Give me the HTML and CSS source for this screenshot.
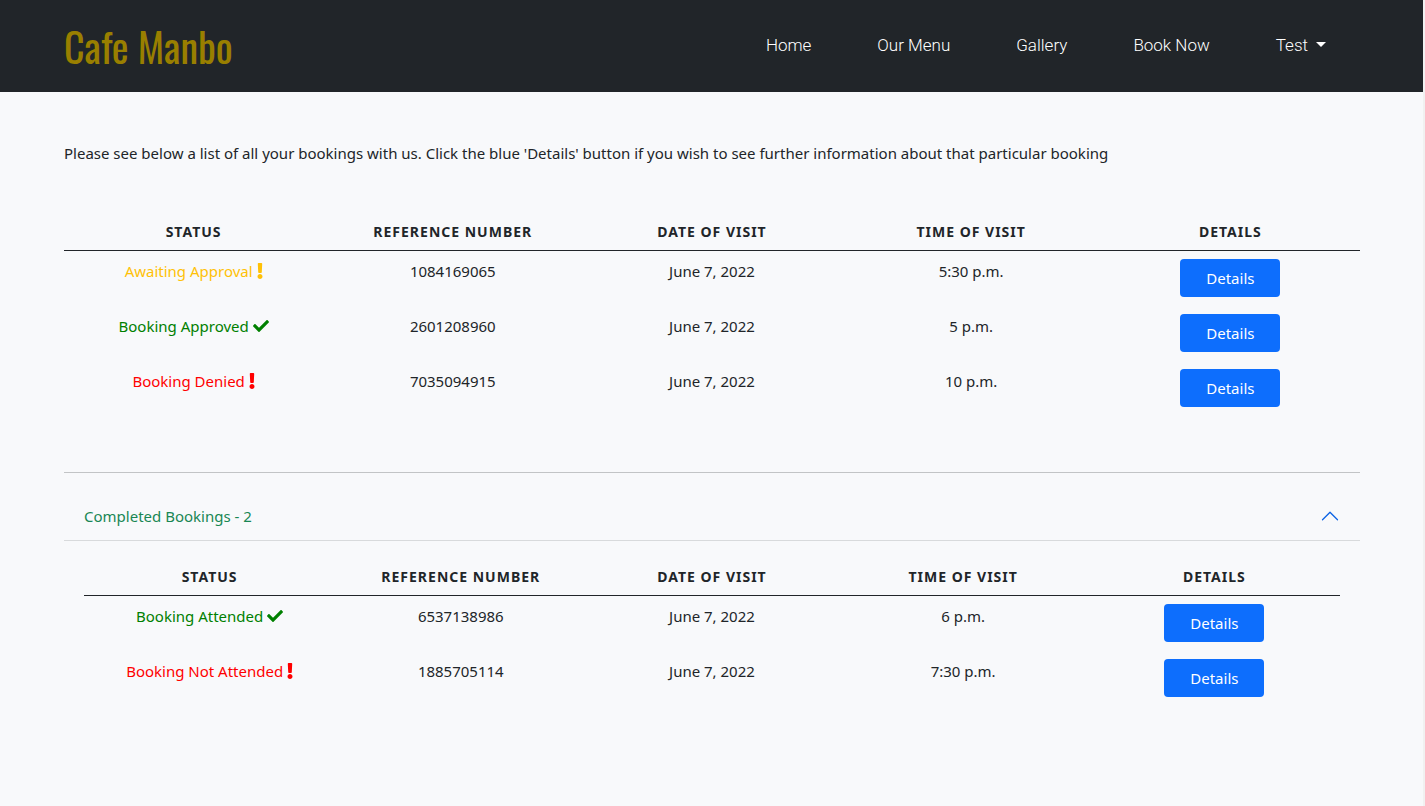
FILE: index.html
```html
<!DOCTYPE html>
<html lang="en">
<head>
<meta charset="utf-8">
<meta name="viewport" content="width=device-width, initial-scale=1">
<title>Cafe Manbo - My Bookings</title>
<link rel="stylesheet" href="styles.css">
</head>
<body>
<svg class="sprite" aria-hidden="true">
  <symbol id="exclaim" viewBox="0 0 192 512"><path d="M176 432c0 44.100-35.900 80-80 80s-80-35.900-80-80 35.900-80 80-80 80 35.900 80 80zM25.260 25.200l13.600 272c.600 12.800 11.200 22.800 24 22.800h66.280c12.800 0 23.300-10 24-22.800l13.600-272C167.400 11.500 156.500 0 142.770 0H49.230C35.500 0 24.600 11.500 25.260 25.200z"/></symbol>
  <symbol id="check" viewBox="0 0 512 512"><path d="M173.898 439.404l-166.400-166.400c-9.997-9.997-9.997-26.206 0-36.204l36.203-36.204c9.997-9.998 26.207-9.998 36.204 0L192 312.690 432.095 72.596c9.997-9.997 26.207-9.997 36.204 0l36.203 36.204c9.997 9.997 9.997 26.206 0 36.204l-294.400 294.401c-9.998 9.997-26.207 9.997-36.204-.001z"/></symbol>
</svg>
<header class="header">
  <a class="brand" href="#">Cafe Manbo</a>
  <nav class="nav">
    <a class="nav-link" href="#">Home</a>
    <a class="nav-link" href="#">Our Menu</a>
    <a class="nav-link" href="#">Gallery</a>
    <a class="nav-link" href="#">Book Now</a>
    <a class="nav-link dropdown" href="#">Test</a>
  </nav>
</header>
<main class="content">
  <p class="intro">Please see below a list of all your bookings with us. Click the blue 'Details' button if you wish to see further information about that particular booking</p>
  <table class="bookings">
    <thead>
      <tr><th>Status</th><th>Reference Number</th><th>Date of Visit</th><th>Time of Visit</th><th>Details</th></tr>
    </thead>
    <tbody>
      <tr><td class="pending">Awaiting Approval <svg class="icon narrow"><use href="#exclaim"/></svg></td><td>1084169065</td><td>June 7, 2022</td><td>5:30 p.m.</td><td><button class="btn" type="button">Details</button></td></tr>
      <tr><td class="good">Booking Approved <svg class="icon"><use href="#check"/></svg></td><td>2601208960</td><td>June 7, 2022</td><td>5 p.m.</td><td><button class="btn" type="button">Details</button></td></tr>
      <tr><td class="bad">Booking Denied <svg class="icon narrow"><use href="#exclaim"/></svg></td><td>7035094915</td><td>June 7, 2022</td><td>10 p.m.</td><td><button class="btn" type="button">Details</button></td></tr>
    </tbody>
  </table>
  <hr class="divider">
  <section class="accordion">
    <button class="accordion-toggle" type="button" aria-expanded="true" aria-controls="completed">
      <span>Completed Bookings - 2</span>
      <svg class="chevron" viewBox="0 0 16 16"><path fill-rule="evenodd" d="M1.646 11.354a.5.5 0 0 0 .708 0L8 5.707l5.646 5.647a.5.5 0 0 0 .708-.708l-6-6a.5.5 0 0 0-.708 0l-6 6a.5.5 0 0 0 0 .708z"/></svg>
    </button>
    <div class="accordion-body" id="completed">
      <table class="bookings">
        <thead>
          <tr><th>Status</th><th>Reference Number</th><th>Date of Visit</th><th>Time of Visit</th><th>Details</th></tr>
        </thead>
        <tbody>
          <tr><td class="good">Booking Attended <svg class="icon"><use href="#check"/></svg></td><td>6537138986</td><td>June 7, 2022</td><td>6 p.m.</td><td><button class="btn" type="button">Details</button></td></tr>
          <tr><td class="bad">Booking Not Attended <svg class="icon narrow"><use href="#exclaim"/></svg></td><td>1885705114</td><td>June 7, 2022</td><td>7:30 p.m.</td><td><button class="btn" type="button">Details</button></td></tr>
        </tbody>
      </table>
    </div>
  </section>
</main>
</body>
</html>
```
FILE: styles.css
```css
* { box-sizing: border-box; }

body {
  margin: 0;
  min-height: 100vh;
  border-right: 2px solid #f1f1f1;
  background: #f8f9fb;
  color: #212529;
  font: 400 15px/24px "Segoe UI", "Noto Sans", sans-serif;
}

.sprite { position: absolute; width: 0; height: 0; }

.header {
  display: flex;
  align-items: center;
  justify-content: space-between;
  padding: 16px 64px;
  background: #212529;
}

.brand {
  color: #997f00;
  font: 400 40px/60px Oswald, "Roboto Condensed", sans-serif;
  text-decoration: none;
}

.nav { display: flex; padding-bottom: 2px; }

.nav-link {
  padding: 0 33px;
  color: #fff;
  font: 300 17px/24px Roboto, sans-serif;
  text-decoration: none;
}

.dropdown::after {
  content: "";
  display: inline-block;
  margin-left: 8px;
  vertical-align: 4px;
  border: 5px solid transparent;
  border-top-color: currentColor;
  border-bottom: 0;
}

.content { padding: 49px 63px 40px 64px; }

.intro { margin: 0 0 48px; }

.bookings {
  width: 100%;
  table-layout: fixed;
  border-collapse: separate;
  border-spacing: 0;
  text-align: center;
}

.bookings th {
  padding: 9px 8px 8px;
  border-bottom: 1px solid #212529;
  font-size: 14px;
  font-weight: 700;
  line-height: 20px;
  letter-spacing: 1px;
  text-transform: uppercase;
}

.bookings td {
  height: 55px;
  padding: 8px;
  vertical-align: top;
}

.pending { color: #ffc107; }
.good { color: #008000; }
.bad { color: #f00; }

.icon {
  width: 16px;
  height: 16px;
  fill: currentColor;
  vertical-align: -2px;
}

.icon.narrow { width: 6px; }

.btn {
  display: block;
  width: 100px;
  height: 38px;
  margin: 0 auto;
  border: 0;
  border-radius: 4px;
  background: #0d6efd;
  color: #fff;
  font: inherit;
}

.divider {
  margin: 56px 0 19px;
  border: 0;
  border-top: 1px solid #c2c4c6;
}

.accordion-toggle {
  display: flex;
  align-items: center;
  justify-content: space-between;
  width: 100%;
  padding: 12px 20px;
  border: 0;
  border-bottom: 1px solid #d8dadc;
  background: none;
  color: #198754;
  font: inherit;
}

.chevron { width: 20px; height: 20px; fill: #0c63e4; }

.accordion-body { padding: 17px 20px; }
```
